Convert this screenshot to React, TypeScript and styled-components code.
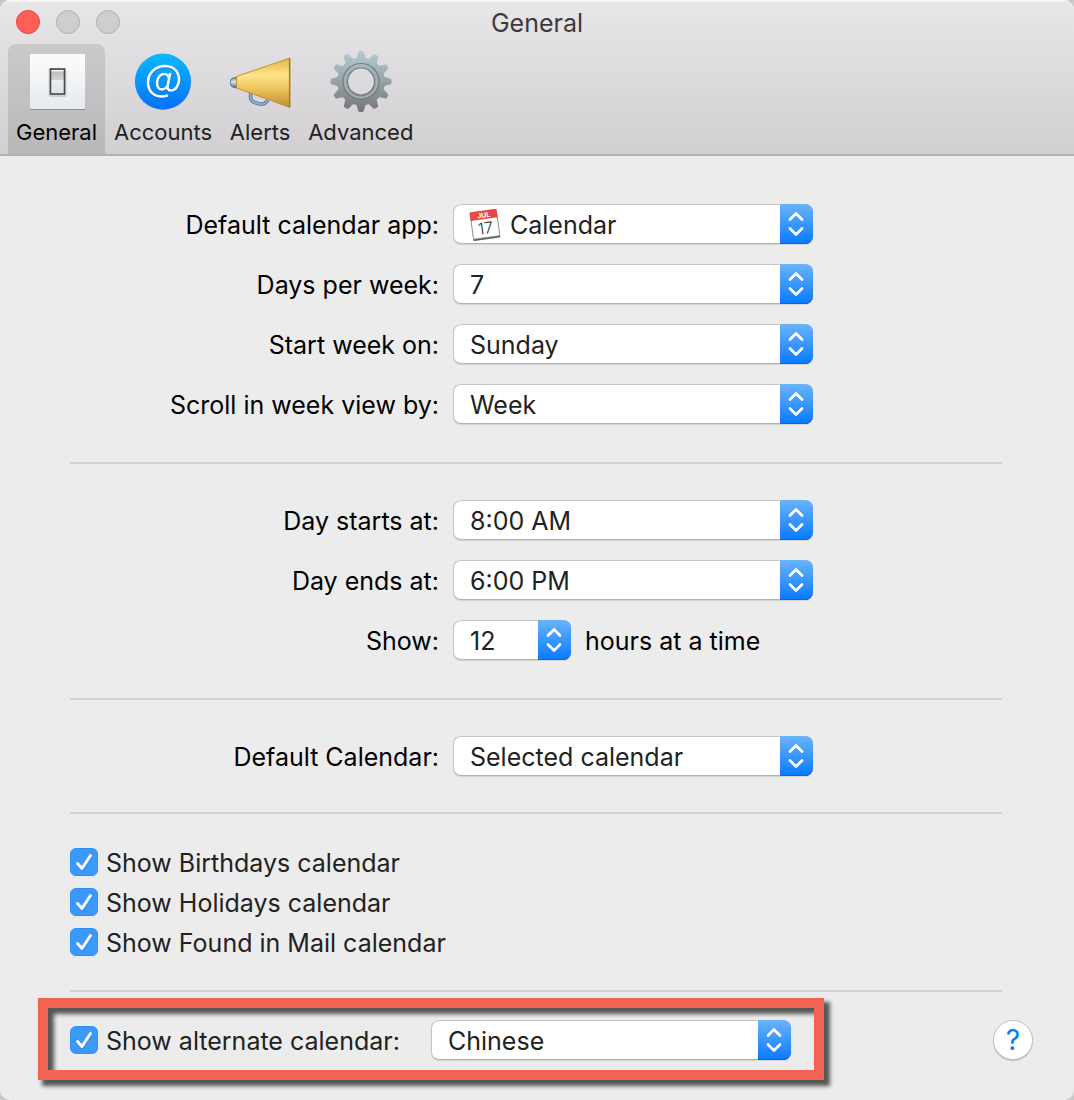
import React, { useId, useState } from 'react';
import styled, { createGlobalStyle } from 'styled-components';

const GlobalStyle = createGlobalStyle`
  *, *::before, *::after { box-sizing: border-box; }
  body { margin: 0; background: #c9c9c9; }
  body, button, select { font-family: Inter, Roboto, "Liberation Sans", sans-serif; }
`;

const Window = styled.main`
  min-height: 100vh;
  border-radius: 10px;
  overflow: hidden;
  background: #ececec;
  color: #000;
  font-size: 25px;
  line-height: 40px;
`;

const Header = styled.header`
  background: linear-gradient(#e8e6e8, #d1cfd1);
  border-bottom: 2px solid #b2b0b2;
  box-shadow: inset 0 2px 0 #f4f3f4;
`;

const TitleBar = styled.div`
  display: grid;
  grid-template-columns: 1fr auto 1fr;
  align-items: center;
  height: 44px;
  padding: 0 16px;
`;

const Title = styled.h1`
  margin: 0;
  padding-top: 2px;
  color: #3c3a3c;
  font-size: 25px;
  font-weight: 400;
  line-height: 42px;
`;

const Lights = styled.div`
  display: flex;
  gap: 16px;
`;

const Light = styled.button<{ $close?: boolean }>`
  width: 24px;
  height: 24px;
  padding: 0;
  border-radius: 50%;
  border: 1px solid ${p => (p.$close ? '#e2443f' : '#b0aeb0')};
  background: ${p => (p.$close ? '#ff5f58' : '#cfcdcf')};
`;

const Tabs = styled.nav`
  display: flex;
  gap: 1px;
  padding: 0 8px;
`;

const Tab = styled.button<{ $active?: boolean }>`
  display: flex;
  flex-direction: column;
  align-items: center;
  height: 110px;
  padding: 6px 8px 0;
  border: 0;
  border-radius: 8px 8px 0 0;
  background: ${p => (p.$active ? 'linear-gradient(#cbc9cb, #b9b7b9)' : 'transparent')};
  color: ${p => (p.$active ? '#000' : '#222')};
  font-size: 22px;
  line-height: 28px;

  svg { display: block; margin-bottom: 6px; }
`;

const Pane = styled.form`
  padding: 48px 72px 20px 70px;
`;

const Rows = styled.section`
  display: grid;
  gap: 20px;
`;

const Row = styled.div`
  display: grid;
  grid-template-columns: 369px auto 1fr;
  column-gap: 14px;
  align-items: center;
`;

const RowLabel = styled.label`
  padding-top: 2px;
  line-height: 38px;
  text-align: right;
  white-space: nowrap;
`;

const Suffix = styled.span`
  padding-top: 2px;
  line-height: 38px;
`;

const Divider = styled.hr<{ $top: number; $bottom: number }>`
  height: 2px;
  margin: ${p => p.$top}px 0 ${p => p.$bottom}px;
  border: 0;
  background: #d2d2d2;
`;

const PopUp = styled.div<{ $narrow?: boolean }>`
  position: relative;
  width: ${p => (p.$narrow ? 118 : 360)}px;
  height: 40px;
`;

const SelectBox = styled.select<{ $icon?: boolean }>`
  appearance: none;
  display: block;
  width: 100%;
  height: 40px;
  padding: 2px 40px 0 ${p => (p.$icon ? 56 : 16)}px;
  border: 1px solid #c6c6c6;
  border-bottom-color: #b2b2b2;
  border-radius: 8px;
  background: #fff;
  box-shadow: 0 1px 1px rgba(0, 0, 0, 0.1);
  color: #222;
  font-size: 25px;
  line-height: 36px;
`;

const Cap = styled.span`
  position: absolute;
  top: 0;
  right: 0;
  display: grid;
  place-items: center;
  width: 33px;
  height: 40px;
  border-radius: 0 8px 8px 0;
  background: linear-gradient(#6bb3fa, #087aff);
  box-shadow: inset 0 -1px 0 #0a63e6;
  pointer-events: none;
`;

const SelectIcon = styled.span`
  position: absolute;
  top: 4px;
  left: 16px;
  display: flex;
  pointer-events: none;
`;

const Checks = styled.section`
  display: grid;
  justify-items: start;
`;

const CheckLabel = styled.label`
  display: flex;
  align-items: center;
  gap: 8px;
  color: #222;
  white-space: nowrap;
`;

const CheckText = styled.span`
  padding-top: 2px;
  line-height: 38px;
`;

const CheckBox = styled.span`
  position: relative;
  display: flex;

  input {
    appearance: none;
    width: 28px;
    height: 28px;
    margin: 0;
    border: 1px solid #b8b8b8;
    border-radius: 6px;
    background: #fff;
  }
  input:checked { border-color: #2f8ff5; background: #3b99fc; }
  input:not(:checked) + svg { display: none; }
  svg { position: absolute; inset: 0; pointer-events: none; }
`;

const Footer = styled.footer`
  display: flex;
  justify-content: space-between;
  align-items: center;
  margin-right: -31px;
`;

const Highlighted = styled.div`
  position: relative;
  display: grid;
  grid-template-columns: 361px auto;

  &::after {
    content: '';
    position: absolute;
    inset: -22px -33px -20px -32px;
    border: 10px solid #f26354;
    box-shadow: 5px 5px 4px 1px #555, inset 5px 5px 4px 1px #555;
    pointer-events: none;
  }
`;

const Help = styled.button`
  width: 40px;
  height: 40px;
  padding: 0;
  border: 1px solid #c4c4c4;
  border-radius: 50%;
  background: #fff;
  box-shadow: 0 1px 1px rgba(0, 0, 0, 0.2);
  color: #087aff;
  font-size: 28px;
  line-height: 38px;
`;

const GeneralIcon = () => (
  <svg width="62" height="62" viewBox="0 0 62 62" aria-hidden="true">
    <defs>
      <linearGradient id="plate" x2="0" y2="1"><stop stopColor="#fcfcfd" /><stop offset="1" stopColor="#e7ebee" /></linearGradient>
      <linearGradient id="rocker" x2="0" y2="1"><stop stopColor="#b4b6b9" /><stop offset=".42" stopColor="#cfd1d3" /><stop offset=".46" stopColor="#eceef0" /><stop offset="1" stopColor="#dfe2e5" /></linearGradient>
    </defs>
    <rect x="4" y="5" width="55" height="55" rx="1" fill="#8f9092" />
    <rect x="4" y="4" width="55" height="55" rx="1" fill="url(#plate)" />
    <rect x="22.500" y="18" width="18" height="29" rx="2" fill="#b5b7ba" opacity=".55" />
    <rect x="24.500" y="19" width="14" height="25" fill="url(#rocker)" stroke="#48484a" strokeWidth="1.6" />
    <path d="M25.500 20.800h12" stroke="#f6f6f7" strokeWidth="1.500" />
  </svg>
);

const AccountsIcon = () => (
  <svg width="62" height="62" viewBox="0 0 62 62" aria-hidden="true">
    <defs>
      <linearGradient id="disc" x2="0" y2="1"><stop stopColor="#0cb9fb" /><stop offset="1" stopColor="#0470fd" /></linearGradient>
      <path id="at" d="M38 24 35.700 35.500c-.6 3.200.8 5 3.300 5 4.500 0 8-5 8-11C47 21 41 16 33 16 23 16 16 23.500 16 32.500c0 9 6 14 14 14 2 0 3.500-.3 5-.9M37 29.500C36.800 26 35 24 32.300 24c-4.300 0-7.300 4.200-7.300 9 0 4 2 6.500 5 6.500 3.300 0 5.800-3 6.400-7" fill="none" strokeLinecap="round" strokeLinejoin="round" strokeWidth="2.500" />
    </defs>
    <circle cx="31" cy="32" r="28" fill="#66819c" opacity=".6" />
    <circle cx="31" cy="31.500" r="28" fill="url(#disc)" />
    <use href="#at" y="1" stroke="#0762bd" opacity=".5" />
    <use href="#at" stroke="#fff" />
  </svg>
);

const AlertsIcon = () => (
  <svg width="62" height="62" viewBox="0 0 62 62" aria-hidden="true">
    <defs>
      <linearGradient id="horn" x2="0" y2="1"><stop stopColor="#e0b040" /><stop offset=".35" stopColor="#ffe68a" /><stop offset=".62" stopColor="#edc45c" /><stop offset="1" stopColor="#c08e30" /></linearGradient>
      <linearGradient id="mouth" x2="0" y2="1"><stop stopColor="#6e8192" /><stop offset=".45" stopColor="#dce8ef" /><stop offset="1" stopColor="#4a6278" /></linearGradient>
    </defs>
    <path d="M22 43c-1.500 6 1 9 5 10l4 1c4 1 6-1 8-4" fill="none" stroke="#6982aa" strokeWidth="3.800" />
    <path d="M22 43c-1.500 6 1 9 5 10l4 1c4 1 6-1 8-4" fill="none" stroke="#9fb3d1" strokeWidth="1.300" />
    <path d="M8 27 3 28.500c-2 1-2 7 0 8.200L8 38z" fill="url(#mouth)" stroke="#526c83" />
    <path d="M7.500 26.500 61 8v49.500L7.500 38z" fill="url(#horn)" stroke="#b4872c" strokeWidth=".8" />
    <path d="M60.500 8.500v48.500" stroke="#a47827" strokeWidth="1.200" />
  </svg>
);

const teeth = Array.from({ length: 12 }, (_, i) => i * 30);

const AdvancedIcon = () => (
  <svg width="62" height="62" viewBox="0 0 62 62" aria-hidden="true">
    <defs>
      <linearGradient id="steel" gradientUnits="userSpaceOnUse" x1="0" y1="1" x2="0" y2="61"><stop stopColor="#b4ccd4" /><stop offset=".5" stopColor="#98a3a7" /><stop offset="1" stopColor="#777879" /></linearGradient>
      <mask id="gear">
        <circle cx="31" cy="31.500" r="24" fill="#fff" />
        {teeth.map(a => (
          <path key={a} d="M26 9.500 28.300 2Q28.500 1 29.500 1h3Q33.500 1 33.700 2L36 9.500z" fill="#fff" transform={`rotate(${a} 31 31.500)`} />
        ))}
        <circle cx="31" cy="31.500" r="13.500" fill="#000" />
      </mask>
    </defs>
    <rect width="62" height="62" fill="url(#steel)" mask="url(#gear)" />
    <circle cx="31" cy="31.500" r="18" fill="none" stroke="#737f84" strokeWidth="1.200" />
    <circle cx="31" cy="31.500" r="16" fill="none" stroke="#a9b4b8" strokeWidth="1.500" />
    <circle cx="31" cy="31.500" r="13.500" fill="none" stroke="#747c80" strokeWidth="1.200" />
  </svg>
);

const CalendarIcon = () => (
  <svg width="32" height="34" viewBox="0 0 32 34" aria-hidden="true">
    <g transform="rotate(-8 16 17)">
      <rect x="2.500" y="4" width="27" height="27.500" rx="1" fill="#5c6164" />
      <rect x="2.800" y="3" width="26.400" height="26.500" rx="1" fill="#fff" stroke="#8d9599" strokeWidth=".8" />
      <path d="M2.500 2.500h27v8.500h-27z" fill="#e94742" />
      <text x="16" y="9.500" fill="#fff" fontFamily="Inter, sans-serif" fontSize="7" fontWeight="700" textAnchor="middle">JUL</text>
      <text x="16" y="26" fill="#333" fontFamily="Inter, sans-serif" fontSize="16" fontWeight="300" textAnchor="middle">17</text>
    </g>
  </svg>
);

const Chevrons = () => (
  <svg width="17" height="26" viewBox="0 0 17 26" fill="none" stroke="#fff" strokeWidth="2.700" strokeLinecap="round" strokeLinejoin="round" aria-hidden="true">
    <path d="M2 8.500 8 2.500l6 6M2 17.500l6 6 6-6" />
  </svg>
);

interface SelectProps {
  id: string;
  options: string[];
  narrow?: boolean;
  icon?: React.ReactNode;
  label?: string;
}

const Select = ({ id, options, narrow, icon, label }: SelectProps) => (
  <PopUp $narrow={narrow}>
    <SelectBox id={id} $icon={!!icon} aria-label={label}>
      {options.map(o => <option key={o}>{o}</option>)}
    </SelectBox>
    {icon && <SelectIcon>{icon}</SelectIcon>}
    <Cap><Chevrons /></Cap>
  </PopUp>
);

interface FieldProps extends Omit<SelectProps, 'id'> {
  title: string;
  suffix?: string;
}

const Field = ({ title, suffix, ...select }: FieldProps) => {
  const id = useId();
  return (
    <Row>
      <RowLabel htmlFor={id}>{title}</RowLabel>
      <Select id={id} {...select} />
      {suffix && <Suffix>{suffix}</Suffix>}
    </Row>
  );
};

const Check = ({ children }: { children: string }) => (
  <CheckLabel>
    <CheckBox>
      <input type="checkbox" defaultChecked />
      <svg width="28" height="28" viewBox="0 0 28 28" fill="none" strokeLinecap="round" strokeLinejoin="round" strokeWidth="3" aria-hidden="true">
        <path d="m7.500 16.500 5 5.500 8.500-13.500" stroke="#2879cf" opacity=".5" />
        <path d="m7.500 15.500 4.500 5 8.500-13" stroke="#fff" />
      </svg>
    </CheckBox>
    <CheckText>{children}</CheckText>
  </CheckLabel>
);

const tabs = [
  { name: 'General', Icon: GeneralIcon },
  { name: 'Accounts', Icon: AccountsIcon },
  { name: 'Alerts', Icon: AlertsIcon },
  { name: 'Advanced', Icon: AdvancedIcon },
];

export default function App() {
  const [active, setActive] = useState('General');
  return (
    <>
      <GlobalStyle />
      <Window>
        <Header>
          <TitleBar>
            <Lights>
              <Light $close aria-label="Close" />
              <Light aria-label="Minimize" disabled />
              <Light aria-label="Zoom" disabled />
            </Lights>
            <Title>{active}</Title>
          </TitleBar>
          <Tabs>
            {tabs.map(({ name, Icon }) => (
              <Tab key={name} type="button" $active={name === active} onClick={() => setActive(name)}>
                <Icon />
                {name}
              </Tab>
            ))}
          </Tabs>
        </Header>
        <Pane>
          <Rows>
            <Field title="Default calendar app:" options={['Calendar']} icon={<CalendarIcon />} />
            <Field title="Days per week:" options={['7', '5']} />
            <Field title="Start week on:" options={['Sunday', 'Monday']} />
            <Field title="Scroll in week view by:" options={['Week', 'Day']} />
          </Rows>
          <Divider $top={38} $bottom={36} />
          <Rows>
            <Field title="Day starts at:" options={['8:00 AM', '9:00 AM']} />
            <Field title="Day ends at:" options={['6:00 PM', '7:00 PM']} />
            <Field title="Show:" options={['12', '8']} narrow suffix="hours at a time" />
          </Rows>
          <Divider $top={38} $bottom={36} />
          <Rows>
            <Field title="Default Calendar:" options={['Selected calendar']} />
          </Rows>
          <Divider $top={36} $bottom={28} />
          <Checks>
            <Check>Show Birthdays calendar</Check>
            <Check>Show Holidays calendar</Check>
            <Check>Show Found in Mail calendar</Check>
          </Checks>
          <Divider $top={28} $bottom={28} />
          <Footer>
            <Highlighted>
              <Check>Show alternate calendar:</Check>
              <Select id="alternate" label="Alternate calendar" options={['Chinese', 'Hebrew', 'Islamic']} />
            </Highlighted>
            <Help type="button" aria-label="Help">?</Help>
          </Footer>
        </Pane>
      </Window>
    </>
  );
}
